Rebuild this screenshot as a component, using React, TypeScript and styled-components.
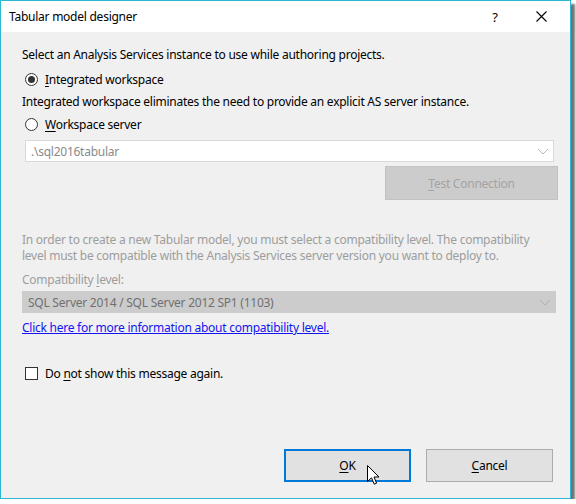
import React from "react";
import styled, { createGlobalStyle } from "styled-components";

const Global = createGlobalStyle`
  html, body { margin: 0; padding: 0; background: #ffffff; }
  body {
    font-family: "Noto Sans", "Open Sans", sans-serif;
    font-size: 12px;
    letter-spacing: -0.25px;
    color: #000;
  }
  * { box-sizing: border-box; }
`;

const Window = styled.div`
  position: relative;
  width: 571px;
  height: 499px;
  border: 1px solid #2bb7cf;
  background: #f0f0f0;
  box-shadow: 4px 4px 2px rgba(0, 0, 0, 0.55);
  display: flex;
  flex-direction: column;
`;

const TitleBar = styled.div`
  height: 31px;
  background: #ffffff;
  display: flex;
  align-items: center;
  padding-left: 8px;
`;

const Title = styled.div`
  flex: 1;
  font-size: 12px;
  line-height: 16px;
`;

const CaptionButton = styled.div<{ $w: number }>`
  width: ${(p) => p.$w}px;
  height: 30px;
  display: flex;
  align-items: center;
  justify-content: center;
  font-size: 13px;
`;

const CaptionSpacer = styled.div`
  width: 6px;
`;

const Body = styled.div`
  flex: 1;
  display: flex;
  flex-direction: column;
  padding: 15px 14px 0 21px;
`;

const Text = styled.div<{ $mt?: number; $muted?: boolean }>`
  line-height: 16px;
  margin-top: ${(p) => p.$mt ?? 0}px;
  color: ${(p) => (p.$muted ? "#9d9d9d" : "#000")};
`;

const U = styled.span`
  text-decoration: underline;
  text-underline-offset: 2px;
`;

const OptionRow = styled.label<{ $mt: number }>`
  display: flex;
  align-items: center;
  gap: 7px;
  height: 16px;
  margin-top: ${(p) => p.$mt}px;
  padding-left: 3px;
`;

const RadioCircle = styled.span<{ $on?: boolean }>`
  width: 13px;
  height: 13px;
  border-radius: 50%;
  border: 1px solid #333;
  background: #fff;
  display: flex;
  align-items: center;
  justify-content: center;
  &::after {
    content: "";
    width: 7px;
    height: 7px;
    border-radius: 50%;
    background: ${(p) => (p.$on ? "#333" : "transparent")};
  }
`;

const CheckBox = styled.span`
  width: 13px;
  height: 13px;
  border: 1px solid #333;
  background: #fff;
`;

const Combo = styled.div<{ $mt: number; $ml: number; $w: number; $grey?: boolean }>`
  margin-top: ${(p) => p.$mt}px;
  margin-left: ${(p) => p.$ml}px;
  width: ${(p) => p.$w}px;
  height: 22px;
  display: flex;
  align-items: center;
  padding: 0 0 0 5px;
  background: ${(p) => (p.$grey ? "#cccccc" : "#ffffff")};
  border: 1px solid ${(p) => (p.$grey ? "#cccccc" : "#d9d9d9")};
  color: ${(p) => (p.$grey ? "#707070" : "#8a8a8a")};
`;

const ComboText = styled.span`
  flex: 1;
`;

const Chevron = styled.svg`
  width: 20px;
  height: 20px;
  flex: none;
`;

const TestRow = styled.div`
  display: flex;
  justify-content: flex-end;
  margin-top: 4px;
  margin-right: -2px;
`;

const DisabledButton = styled.div`
  width: 173px;
  height: 34px;
  background: #cccccc;
  border: 1px solid #c2c2c2;
  color: #a3a3a3;
  display: flex;
  align-items: center;
  justify-content: center;
`;

const Link = styled.a`
  color: #1414f0;
  text-decoration: underline;
  line-height: 16px;
  margin-top: 7px;
  align-self: flex-start;
`;

const Footer = styled.div`
  margin-top: auto;
  display: flex;
  justify-content: flex-end;
  gap: 15px;
  padding: 0 3px 16px 0;
`;

const DialogButton = styled.div<{ $default?: boolean }>`
  position: relative;
  width: 127px;
  height: 33px;
  background: #e1e1e1;
  border: ${(p) => (p.$default ? "2px solid #0078d7" : "1px solid #adadad")};
  display: flex;
  align-items: center;
  justify-content: center;
`;

const Pointer = styled.svg`
  position: absolute;
  left: 81px;
  top: 14px;
  width: 13px;
  height: 21px;
`;

export default function App() {
  return (
    <>
      <Global />
      <Window>
        <TitleBar>
          <Title>Tabular model designer</Title>
          <CaptionButton $w={46}>?</CaptionButton>
          <CaptionButton $w={46}>
            <svg width="11" height="11" viewBox="0 0 11 11">
              <path d="M0.5 0.5 L10.5 10.5 M10.5 0.5 L0.5 10.5" stroke="#000" strokeWidth="1.1" fill="none" />
            </svg>
          </CaptionButton>
          <CaptionSpacer />
        </TitleBar>
        <Body>
          <Text>Select an Analysis Services instance to use while authoring projects.</Text>
          <OptionRow $mt={8}>
            <RadioCircle $on />
            <span>
              <U>I</U>ntegrated workspace
            </span>
          </OptionRow>
          <Text $mt={7}>Integrated workspace eliminates the need to provide an explicit AS server instance.</Text>
          <OptionRow $mt={6}>
            <RadioCircle />
            <span>
              <U>W</U>orkspace server
            </span>
          </OptionRow>
          <Combo $mt={8} $ml={3} $w={529}>
            <ComboText>.\sql2016tabular</ComboText>
            <Chevron viewBox="0 0 20 20">
              <path d="M5 8 L10 13 L15 8" stroke="#b5b5b5" strokeWidth="1" fill="none" />
            </Chevron>
          </Combo>
          <TestRow>
            <DisabledButton>
              <span>
                <U>T</U>est Connection
              </span>
            </DisabledButton>
          </TestRow>
          <Text $mt={32} $muted>
            In order to create a new Tabular model, you must select a compatibility level. The compatibility
            <br />
            level must be compatible with the Analysis Services server version you want to deploy to.
          </Text>
          <Text $mt={8} $muted>
            Compatibility <U>l</U>evel:
          </Text>
          <Combo $mt={3} $ml={0} $w={534} $grey>
            <ComboText>SQL Server 2014 / SQL Server 2012 SP1 (1103)</ComboText>
            <Chevron viewBox="0 0 20 20">
              <path d="M5 8 L10 13 L15 8" stroke="#b0b0b0" strokeWidth="1" fill="none" />
            </Chevron>
          </Combo>
          <Link>Click here for more information about compatibility level.</Link>
          <OptionRow $mt={29}>
            <CheckBox />
            <span>
              Do <U>n</U>ot show this message again.
            </span>
          </OptionRow>
          <Footer>
            <DialogButton $default>
              <span>
                <U>O</U>K
              </span>
              <Pointer viewBox="0 0 13 21">
                <path
                  d="M0.5 0.5 L0.5 16.5 L4.5 12.8 L7.2 19.2 L9.6 18.2 L7 12 L12 12 Z"
                  fill="#ffffff"
                  stroke="#000"
                  strokeWidth="1"
                  strokeLinejoin="miter"
                />
              </Pointer>
            </DialogButton>
            <DialogButton>
              <span>
                <U>C</U>ancel
              </span>
            </DialogButton>
          </Footer>
        </Body>
      </Window>
    </>
  );
}
